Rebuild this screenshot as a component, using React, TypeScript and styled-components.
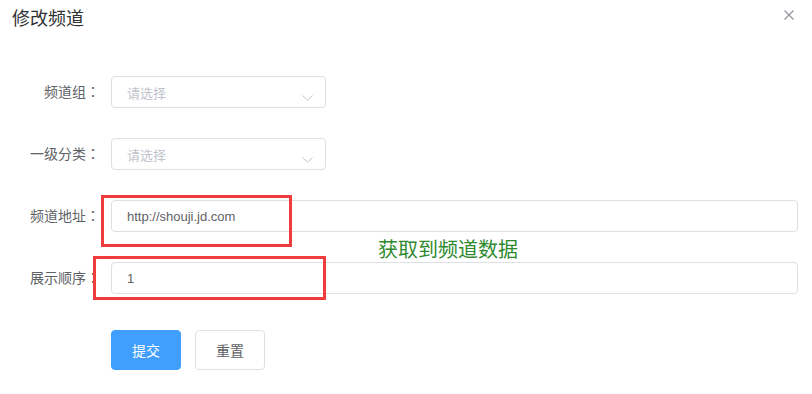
import styled, { createGlobalStyle } from 'styled-components';

const GlobalStyle = createGlobalStyle`
  html, body {
    margin: 0;
    padding: 0;
    background: #ffffff;
  }

  * {
    box-sizing: border-box;
  }

  body {
    font-family: 'Liberation Sans', 'Noto Sans CJK SC', sans-serif;
  }
`;

interface IFormRow {
  label: string;
  type: 'select' | 'input';
  value?: string;
}

const rows: IFormRow[] = [
  { label: '频道组', type: 'select' },
  { label: '一级分类', type: 'select' },
  { label: '频道地址', type: 'input', value: 'http://shouji.jd.com' },
  { label: '展示顺序', type: 'input', value: '1' },
];

const ChevronDown = () => (
  <svg width="11" height="6" viewBox="0 0 11 6" fill="none">
    <path d="M0.5 0.5L5.5 5.2L10.5 0.5" stroke="#c0c4cc" strokeWidth="1" />
  </svg>
);

const CloseIcon = () => (
  <svg width="10" height="10" viewBox="0 0 10 10" fill="none">
    <path d="M0.5 0.5L9.5 9.5M9.5 0.5L0.5 9.5" stroke="#909399" strokeWidth="1.2" />
  </svg>
);

const App = () => {
  return (
    <Dialog>
      <GlobalStyle />

      <Header>
        <Title>修改频道</Title>
        <CloseButton>
          <CloseIcon />
        </CloseButton>
      </Header>

      <Form>
        {rows.map((row) => (
          <FormRow key={row.label}>
            <Label>
              {row.label}
              <Colon>：</Colon>
            </Label>
            {row.type === 'select' ? (
              <SelectBox>
                <Placeholder>请选择</Placeholder>
                <Arrow>
                  <ChevronDown />
                </Arrow>
              </SelectBox>
            ) : (
              <InputBox>{row.value}</InputBox>
            )}
          </FormRow>
        ))}

        <ButtonRow>
          <Button primary>提交</Button>
          <Button>重置</Button>
        </ButtonRow>
      </Form>

      {/* 스크린샷 위 주석 표시 */}
      <Mark style={{ left: 101, top: 195, width: 191, height: 52 }} />
      <Mark style={{ left: 93, top: 256, width: 233, height: 44 }} />
      <Note>获取到频道数据</Note>
    </Dialog>
  );
};

export default App;

const Dialog = styled.div`
  position: relative;
  width: 812px;
  height: 394px;
  background: #ffffff;
  overflow: hidden;
`;

const Header = styled.div`
  display: flex;
  justify-content: space-between;
  align-items: flex-start;
  padding: 7px 18px 0 12px;
`;

const Title = styled.div`
  font-size: 18px;
  line-height: 24px;
  color: #303133;
`;

const CloseButton = styled.div`
  display: flex;
  margin-top: 3px;
  cursor: pointer;
`;

const Form = styled.div`
  display: flex;
  flex-direction: column;
  gap: 30px;
  padding: 45px 14px 0 0;
`;

const FormRow = styled.div`
  display: flex;
  align-items: center;
  height: 32px;
`;

const Label = styled.div`
  width: 111px;
  flex-shrink: 0;
  padding-right: 11px;
  margin-top: -2px;
  text-align: right;
  font-size: 14px;
  line-height: 20px;
  color: #606266;
  white-space: nowrap;
`;

const Colon = styled.span`
  font-family: 'Noto Sans CJK TC', 'Noto Sans CJK SC', sans-serif;
`;

const FieldBase = styled.div`
  height: 32px;
  border: 1px solid #dcdfe6;
  border-radius: 4px;
  padding: 0 15px;
  display: flex;
  align-items: center;
  font-size: 13px;
`;

const SelectBox = styled(FieldBase)`
  width: 215px;
  justify-content: space-between;
  padding-right: 12px;
`;

const Placeholder = styled.span`
  color: #c0c4cc;
`;

const Arrow = styled.span`
  display: flex;
  margin-top: 12px;
`;

const InputBox = styled(FieldBase)`
  flex: 1;
  color: #606266;
`;

const ButtonRow = styled.div`
  display: flex;
  gap: 14px;
  padding-left: 111px;
  margin-top: 6px;
`;

const Button = styled.div<{ primary?: boolean }>`
  width: 70px;
  height: 40px;
  display: flex;
  justify-content: center;
  align-items: center;
  border-radius: 4px;
  font-size: 14px;
  cursor: pointer;
  border: 1px solid ${({ primary }) => (primary ? '#409eff' : '#dcdfe6')};
  background: ${({ primary }) => (primary ? '#409eff' : '#ffffff')};
  color: ${({ primary }) => (primary ? '#ffffff' : '#606266')};
`;

const Mark = styled.div`
  position: absolute;
  border: 3px solid #f03c3c;
  pointer-events: none;
`;

const Note = styled.div`
  position: absolute;
  left: 378px;
  top: 237px;
  font-size: 20px;
  line-height: 26px;
  color: #2f8a2f;
  white-space: nowrap;
`;
